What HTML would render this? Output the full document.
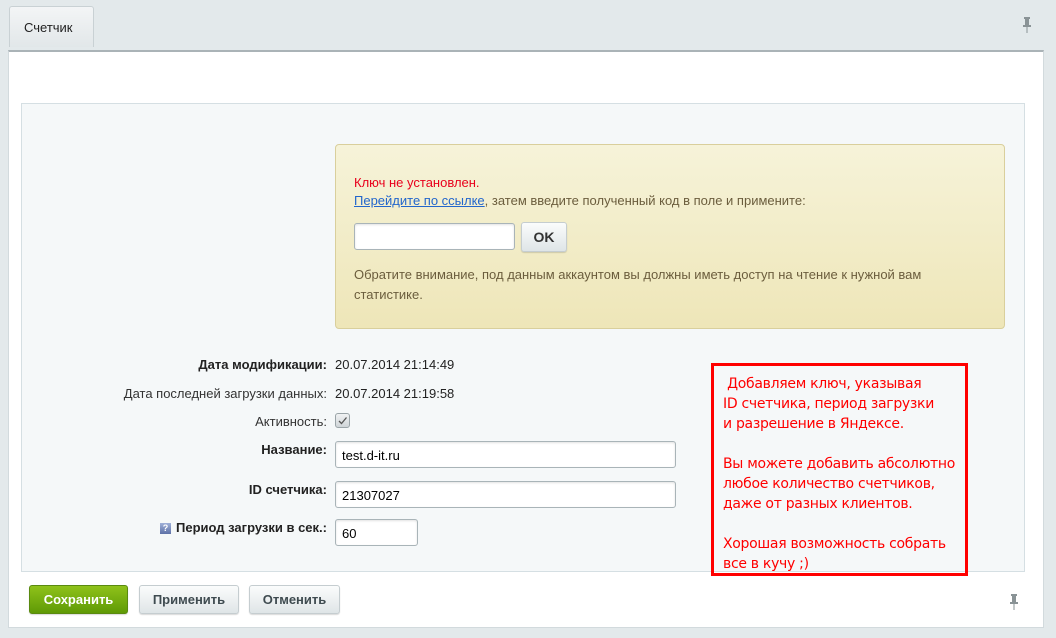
<!DOCTYPE html>
<html><head><meta charset="utf-8"><style>
*{margin:0;padding:0;box-sizing:border-box}
body{width:1056px;height:638px;background:#e3e9eb;font-family:"Liberation Sans",Arial,sans-serif;font-size:13px;color:#000;position:relative;overflow:hidden}
.abs{position:absolute}
.tab{left:9px;top:6px;width:85px;height:41px;background:linear-gradient(#f3f5f6,#e2e7e9);border:1px solid #c9d1d4;border-bottom:none;border-radius:3px 3px 0 0;font-size:13px;color:#222;padding:13px 0 0 14px}
.panel{left:8px;top:50px;width:1036px;height:578px;background:#fff;border:1px solid #d2dadd;border-top:2px solid #aab3b7}
.inner{left:21px;top:103px;width:1004px;height:469px;background:#f5f8f9;border:1px solid #d5dfe3}
.yel{left:335px;top:144px;width:670px;height:185px;background:linear-gradient(#f6f3d9,#eee6b8);border:1px solid #d9cf9c;border-radius:4px}
.t{font-size:13px;color:#6b5d3d;white-space:nowrap}
.inp{background:#fff;border:1px solid #a9b4b8;border-radius:3px;box-shadow:inset 0 1px 2px rgba(0,0,0,.12);font-size:13px;padding:6px 0 0 6px;color:#000}
.lbl{right:729px;font-size:13px;color:#333;white-space:nowrap;text-align:right}
.b{font-weight:bold;color:#222}
.btn{top:585px;height:29px;border-radius:3px;border:1px solid #c5cdd0;background:linear-gradient(#fbfcfc,#dfe5e7);font-weight:bold;font-size:13px;color:#3f4b50;text-align:center;line-height:27px;box-shadow:0 1px 1px rgba(0,0,0,.15)}
.red{left:711px;top:363px;width:257px;height:213px;border:3px solid #f00;color:#f00;font-family:"Comic Sans MS","DejaVu Sans",sans-serif;font-size:14px;line-height:20px;padding:8px 0 0 9px;white-space:pre;letter-spacing:-.3px}
</style></head><body>
<div class="abs panel"></div>
<div class="abs tab">Счетчик</div>
<svg class="abs" style="left:1021px;top:17px" width="12" height="17" viewBox="0 0 12 17"><rect x="3" y="0" width="6" height="2" fill="#8a9396"/><rect x="4" y="2" width="4" height="6" fill="#8a9396"/><rect x="2" y="8" width="8" height="2" fill="#8a9396"/><rect x="5.5" y="10" width="1" height="6" fill="#8a9396"/></svg>
<svg class="abs" style="left:1008px;top:594px" width="12" height="17" viewBox="0 0 12 17"><rect x="3" y="0" width="6" height="2" fill="#8a9396"/><rect x="4" y="2" width="4" height="6" fill="#8a9396"/><rect x="2" y="8" width="8" height="2" fill="#8a9396"/><rect x="5.5" y="10" width="1" height="6" fill="#8a9396"/></svg>
<div class="abs inner"></div>
<div class="abs yel"></div>
<div class="abs t" style="left:354px;top:175px;color:#e8001c">Ключ не установлен.</div>
<div class="abs t" style="left:354px;top:193px"><span style="color:#2266cc;text-decoration:underline">Перейдите по ссылке</span>, затем введите полученный код в поле и примените:</div>
<div class="abs inp" style="left:354px;top:223px;width:161px;height:27px"></div>
<div class="abs btn" style="left:521px;top:222px;width:46px;height:30px;line-height:28px;font-size:14px;color:#333">OK</div>
<div class="abs t" style="left:354px;top:265px;line-height:20px">Обратите внимание, под данным аккаунтом вы должны иметь доступ на чтение к нужной вам<br>статистике.</div>
<div class="abs lbl b" style="top:357px">Дата модификации:</div>
<div class="abs t" style="left:335px;top:357px;color:#222">20.07.2014 21:14:49</div>
<div class="abs lbl" style="top:386px">Дата последней загрузки данных:</div>
<div class="abs t" style="left:335px;top:386px;color:#222">20.07.2014 21:19:58</div>
<div class="abs lbl" style="top:414px">Активность:</div>
<div class="abs" style="left:335px;top:413px;width:15px;height:15px;border:1px solid #9aa4a8;border-radius:3px;background:linear-gradient(#f0f2f3,#cfd5d8)"><svg width="13" height="13" style="display:block"><path d="M3 7l2.5 2.5L10.5 3.5" stroke="#555" stroke-width="1.3" fill="none"/></svg></div>
<div class="abs lbl b" style="top:442px">Название:</div>
<div class="abs inp" style="left:335px;top:441px;width:341px;height:27px">test.d-it.ru</div>
<div class="abs lbl b" style="top:482px">ID счетчика:</div>
<div class="abs inp" style="left:335px;top:481px;width:341px;height:27px">21307027</div>
<div class="abs lbl b" style="top:520px"><span style="display:inline-block;width:11px;height:11px;background:linear-gradient(#9fb0d8,#5e72a8);color:#fff;font-size:9px;line-height:11px;text-align:center;vertical-align:1px;margin-right:5px">?</span>Период загрузки в сек.:</div>
<div class="abs inp" style="left:335px;top:519px;width:83px;height:27px">60</div>
<div class="abs btn" style="left:29px;width:99px;background:linear-gradient(#8fc21a,#5f9a06);border-color:#5a8a10;color:#fff">Сохранить</div>
<div class="abs btn" style="left:139px;width:100px">Применить</div>
<div class="abs btn" style="left:249px;width:91px">Отменить</div>
<div class="abs red"> Добавляем ключ, указывая
ID счетчика, период загрузки
и разрешение в Яндексе.

Вы можете добавить абсолютно
любое количество счетчиков,
даже от разных клиентов.

Хорошая возможность собрать
все в кучу ;)</div>
</body></html>
